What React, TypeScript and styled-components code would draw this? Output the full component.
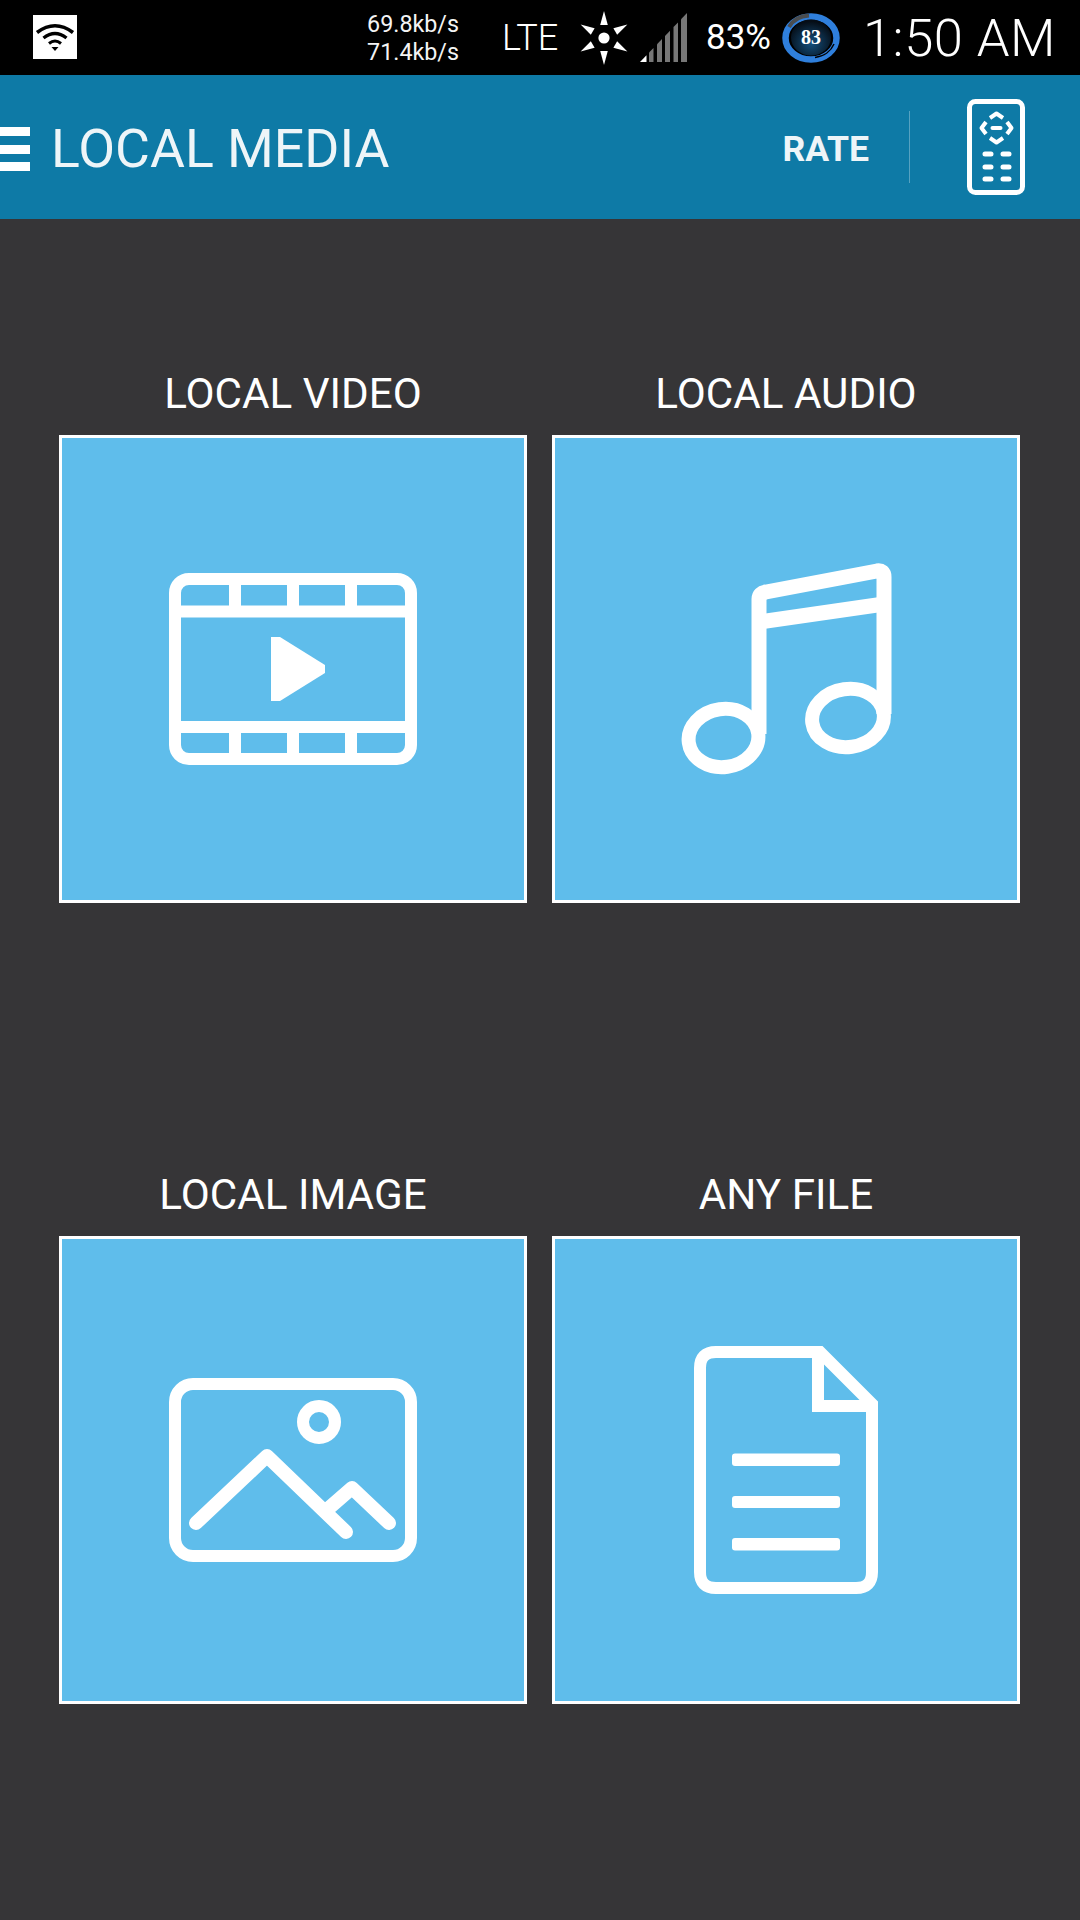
import React from 'react';
import styled, { createGlobalStyle } from 'styled-components';

const GlobalStyle = createGlobalStyle`
  html, body {
    margin: 0;
    padding: 0;
    background: #363537;
  }
  * {
    box-sizing: border-box;
  }
`;

const Page = styled.div`
  width: 1080px;
  height: 1920px;
  overflow: hidden;
  background: #363537;
  font-family: Roboto, "Liberation Sans", sans-serif;
  color: #fff;
`;

const StatusBar = styled.div`
  height: 75px;
  background: #000;
  display: flex;
  align-items: center;
  padding-left: 33px;
`;

const WifiBox = styled.div`
  width: 44px;
  height: 44px;
  margin-top: -1px;
  background: #fff;
  display: flex;
  align-items: center;
  justify-content: center;
`;

const Speeds = styled.div`
  margin-left: 289px;
  width: 93px;
  font-size: 23.3px;
  line-height: 28px;
  text-align: right;
  color: #f4f4f4;
`;

const Network = styled.span`
  margin-left: 43px;
  width: 59px;
  font-size: 36px;
  font-weight: 300;
`;

const SunIcon = styled.svg`
  margin-left: 15px;
  flex: none;
`;

const SignalIcon = styled.svg`
  margin-left: 8px;
  flex: none;
`;

const BatteryText = styled.span`
  margin-left: 19px;
  width: 66px;
  font-size: 35px;
  font-weight: 400;
`;

const BatteryIcon = styled.svg`
  margin-left: 10px;
  flex: none;
`;

const Clock = styled.span`
  margin-left: 23px;
  font-size: 52.5px;
  font-weight: 300;
  letter-spacing: 0.5px;
  white-space: nowrap;
`;

const AppBar = styled.header`
  height: 144px;
  background: #0e7aa6;
  display: flex;
  align-items: center;
`;

const MenuBars = styled.div`
  width: 30px;
  height: 44px;
  margin-top: 4px;
  display: flex;
  flex-direction: column;
  justify-content: space-between;
  span {
    display: block;
    height: 9px;
    background: #fff;
  }
`;

const Title = styled.h1`
  margin: 3px 0 0 21px;
  font-size: 53.6px;
  font-weight: 400;
  color: #eef5f8;
  white-space: nowrap;
`;

const RateButton = styled.span`
  margin: 3px 0 0 auto;
  font-size: 35.6px;
  font-weight: 700;
  color: #eef5f8;
`;

const Divider = styled.div`
  width: 1px;
  height: 72px;
  margin-left: 40px;
  background: rgba(255, 255, 255, 0.3);
`;

const RemoteIcon = styled.svg`
  margin: 0 55px 0 57px;
  flex: none;
`;

const Grid = styled.main`
  display: grid;
  grid-template-columns: repeat(2, 468px);
  column-gap: 25px;
  row-gap: 268px;
  padding: 151px 0 0 59px;
`;

const Item = styled.section`
  display: flex;
  flex-direction: column;
`;

const Label = styled.div`
  height: 48px;
  margin-bottom: 17px;
  font-size: 42.2px;
  line-height: 48px;
  text-align: center;
  color: #fff;
`;

const Tile = styled.div`
  width: 468px;
  height: 468px;
  background: #5fbdeb;
  border: 3px solid #fff;
  display: flex;
  align-items: center;
  justify-content: center;
`;

const line = { fill: 'none', stroke: '#fff', strokeWidth: 12 };

const VideoIcon = () => (
  <svg width="248" height="192" viewBox="169 573 248 192">
    <rect x="175" y="579" width="236" height="180" rx="14" {...line} />
    <path d="M175 611.5H411M175 727H411M235 579V611M293 579V611M351 579V611M235 727V759M293 727V759M351 727V759" {...line} />
    <path d="M271 637H280L325 665V673L280 701H271Z" fill="#fff" />
  </svg>
);

const AudioIcon = () => (
  <svg width="212" height="212" viewBox="681 564 212 212">
    <path d="M760 735V600Q760 594 767 593L878 572Q885 571 885 578V715" {...line} strokeWidth={15} strokeLinejoin="round" />
    <path d="M760 623L885 605" {...line} strokeWidth={15} />
    <ellipse cx="724.5" cy="739" rx="35" ry="29" transform="rotate(-8 724.5 739)" {...line} strokeWidth={14} />
    <ellipse cx="849" cy="719" rx="36" ry="29" transform="rotate(-8 849 719)" {...line} strokeWidth={14} />
  </svg>
);

const ImageIcon = () => (
  <svg width="248" height="184" viewBox="169 1378 248 184">
    <rect x="175" y="1384" width="236" height="172" rx="18" {...line} />
    <circle cx="319" cy="1422" r="16" {...line} />
    <path d="M196 1523L267 1456L346 1532M329 1508L352 1488L389 1523" {...line} strokeWidth={14} strokeLinecap="round" strokeLinejoin="round" />
  </svg>
);

const FileIcon = () => (
  <svg width="184" height="248" viewBox="694 1346 184 248">
    <path d="M716 1352H820L872 1404V1572Q872 1588 856 1588H716Q700 1588 700 1572V1368Q700 1352 716 1352Z" {...line} />
    <path d="M818 1352V1406H872" {...line} />
    <rect x="732" y="1453.5" width="108" height="12.5" rx="3" fill="#fff" />
    <rect x="732" y="1496" width="108" height="12" rx="3" fill="#fff" />
    <rect x="732" y="1538" width="108" height="12.5" rx="3" fill="#fff" />
  </svg>
);

const WifiGlyph = () => (
  <svg width="40" height="30" viewBox="0 0 40 30">
    <path d="M2 10.5Q20 -3 38 10.5" fill="none" stroke="#000" strokeWidth="3.6" />
    <path d="M8.5 16Q20 7 31.5 16" fill="none" stroke="#000" strokeWidth="3.4" />
    <path d="M14 21.5Q20 16.5 26 21.5" fill="none" stroke="#000" strokeWidth="3" />
    <path d="M16.5 25H23.5L20 29Z" fill="#000" />
  </svg>
);

const sunRays = [0, 60, 120, 180, 240, 300];

const Sun = () => (
  <SunIcon width="56" height="56" viewBox="-28 -28 56 56">
    <circle r="5.6" fill="#fff" />
    {sunRays.map((angle) => (
      <polygon key={angle} points="0,-27 3.8,-13 -3.8,-13" fill="#fff" transform={`rotate(${angle})`} />
    ))}
  </SunIcon>
);

const signalBars = [
  [0, 6.5, '#fff'],
  [9, 13.5, '#777'],
  [17, 22, '#777'],
  [25, 30, '#777'],
  [33.5, 38, '#777'],
  [41, 47, '#777'],
] as const;

const topAt = (x: number) => 49 - (x * 49) / 47;

const Signal = () => (
  <SignalIcon width="47" height="49" viewBox="0 0 47 49">
    {signalBars.map(([from, to, color]) => (
      <polygon key={from} points={`${from},49 ${from},${topAt(from)} ${to},${topAt(to)} ${to},49`} fill={color} />
    ))}
  </SignalIcon>
);

const Battery = () => (
  <BatteryIcon width="58" height="50" viewBox="0 0 58 50">
    <defs>
      <radialGradient id="batteryCore" cx="50%" cy="65%" r="60%">
        <stop offset="0%" stopColor="#14507f" />
        <stop offset="100%" stopColor="#050d16" />
      </radialGradient>
    </defs>
    <ellipse cx="29" cy="25" rx="25.5" ry="21.5" fill="none" stroke="#2f7fdc" strokeWidth="6.5" />
    <path d="M7 14C11 7 18 3 27 2.5" fill="none" stroke="#4a4d50" strokeWidth="4" />
    <path d="M33 44.5C42 43.5 49 38 52 31" fill="none" stroke="#000" strokeWidth="1.5" />
    <ellipse cx="29" cy="24.5" rx="20" ry="18" fill="url(#batteryCore)" />
    <text x="29" y="31" textAnchor="middle" fontFamily="'Liberation Serif', serif" fontWeight="700" fontSize="20" fill="#fff">83</text>
  </BatteryIcon>
);

const Remote = () => (
  <RemoteIcon width="58" height="97" viewBox="0 0 58 97">
    <rect x="2.5" y="2.5" width="53" height="91" rx="6" fill="none" stroke="#fff" strokeWidth="5" />
    <path d="M23 19L29.5 14.5L36 19M23 39L29.5 43.5L36 39M19 23L14.5 29L19 35M40 23L44.5 29L40 35" fill="none" stroke="#fff" strokeWidth="4" strokeLinejoin="round" />
    <path d="M25.5 29H33.5" stroke="#fff" strokeWidth="4" strokeLinecap="round" />
    <path d="M18 55H24M36 55H42M18 68H24M36 68H42M18 80H24M36 80H42" stroke="#fff" strokeWidth="5" strokeLinecap="round" />
  </RemoteIcon>
);

const items = [
  { label: 'LOCAL VIDEO', icon: <VideoIcon /> },
  { label: 'LOCAL AUDIO', icon: <AudioIcon /> },
  { label: 'LOCAL IMAGE', icon: <ImageIcon /> },
  { label: 'ANY FILE', icon: <FileIcon /> },
];

const App = () => {
  return (
    <Page>
      <GlobalStyle />
      <StatusBar>
        <WifiBox>
          <WifiGlyph />
        </WifiBox>
        <Speeds>
          69.8kb/s
          <br />
          71.4kb/s
        </Speeds>
        <Network>LTE</Network>
        <Sun />
        <Signal />
        <BatteryText>83%</BatteryText>
        <Battery />
        <Clock>1:50 AM</Clock>
      </StatusBar>
      <AppBar>
        <MenuBars>
          <span />
          <span />
          <span />
        </MenuBars>
        <Title>LOCAL MEDIA</Title>
        <RateButton>RATE</RateButton>
        <Divider />
        <Remote />
      </AppBar>
      <Grid>
        {items.map((item) => (
          <Item key={item.label}>
            <Label>{item.label}</Label>
            <Tile>{item.icon}</Tile>
          </Item>
        ))}
      </Grid>
    </Page>
  );
};

export default App;
